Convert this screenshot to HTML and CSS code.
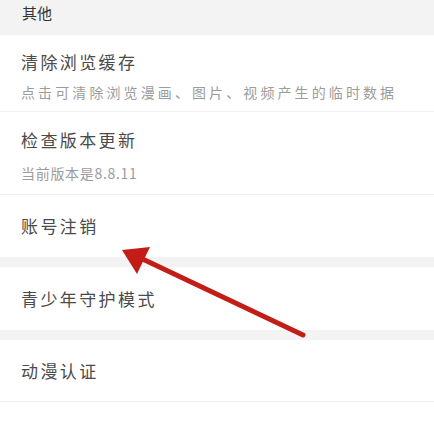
FILE: index.html
```html
<!DOCTYPE html>
<html lang="zh-CN">
<head>
<meta charset="utf-8">
<title>其他</title>
<link rel="stylesheet" href="styles.css">
</head>
<body>
<div class="page">
  <div class="section-head">其他</div>
  <div class="group">
    <div class="item item-double item-cache">
      <div class="title">清除浏览缓存</div>
      <div class="sub">点击可清除浏览漫画、图片、视频产生的临时数据</div>
    </div>
    <div class="item item-double item-version">
      <div class="title">检查版本更新</div>
      <div class="sub sub-version">当前版本是8.8.11</div>
    </div>
    <div class="item item-single item-cancel">
      <div class="title">账号注销</div>
    </div>
  </div>
  <div class="band"></div>
  <div class="group">
    <div class="item item-single item-teen">
      <div class="title">青少年守护模式</div>
    </div>
  </div>
  <div class="band band-2"></div>
  <div class="group">
    <div class="item item-single item-auth">
      <div class="title">动漫认证</div>
    </div>
  </div>
  <svg class="arrow" width="434" height="421" viewBox="0 0 434 421">
    <line x1="303" y1="335" x2="132" y2="254" stroke="#c21d17" stroke-width="5" stroke-linecap="round"/>
    <polygon points="122,250 150,247 137,274" fill="#c21d17"/>
  </svg>
</div>
</body>
</html>
```

FILE: styles.css
```css
html, body {
  margin: 0;
  padding: 0;
  background: #ffffff;
}
.page {
  position: relative;
  width: 434px;
  height: 421px;
  overflow: hidden;
  font-family: "Noto Sans CJK SC", "Noto Sans", sans-serif;
  background: #ffffff;
}
.section-head {
  box-sizing: border-box;
  height: 35px;
  padding: 3px 0 0 22px;
  line-height: 20px;
  font-size: 15px;
  color: #333333;
  background: #f3f3f3;
}
.group {
  background: #ffffff;
}
.item {
  box-sizing: border-box;
  display: flex;
  flex-direction: column;
  justify-content: center;
  padding: 0 20px 0 21px;
  border-bottom: 1px solid #f0f0f0;
}
.title {
  font-size: 17px;
  line-height: 22px;
  letter-spacing: 2.4px;
  color: #4a4a4a;
}
.sub {
  font-size: 14px;
  line-height: 20px;
  letter-spacing: 3.1px;
  color: #9c9c9c;
}
.sub-version {
  letter-spacing: 0.7px;
}
.item-double {
  justify-content: flex-start;
}
.item-cache {
  height: 77px;
  padding-top: 16px;
  gap: 9px;
}
.item-version {
  height: 83px;
  padding-top: 17px;
  gap: 12px;
}
.item-cancel {
  height: 62px;
  border-bottom: none;
}
.item-teen {
  height: 63px;
  border-bottom: none;
}
.item-auth {
  height: 62px;
}
.band {
  height: 10px;
  background: #f3f3f3;
}
.band-2 {
  height: 10px;
}
.arrow {
  position: absolute;
  left: 0;
  top: 0;
  pointer-events: none;
}
```
